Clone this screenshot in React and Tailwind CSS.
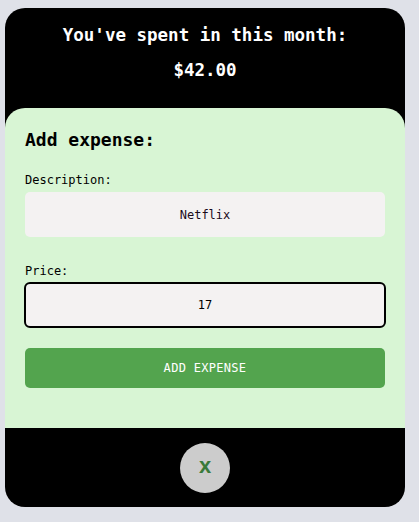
import { useState } from 'react'

export default function App() {
  const [desc, setDesc] = useState('Netflix')
  const [price, setPrice] = useState('17')

  return (
    <div className="min-h-screen bg-[#dfe1e8] pt-2 pl-[5px] font-['DejaVu_Sans_Mono',monospace]">
      <div className="w-[400px] h-[499px] bg-black rounded-[20px] flex flex-col overflow-hidden">
        {/* Summary */}
        <div className="h-[100px] flex flex-col items-center text-white font-bold text-[17.5px]">
          <p className="mt-[17px] leading-5">You've spent in this month:</p>
          <p className="mt-[15px] leading-5">$42.00</p>
        </div>

        {/* Form */}
        <div className="h-[320px] bg-[#d8f5d4] rounded-t-[20px] px-5 pt-[20px]">
          <h2 className="text-[18px] font-bold leading-6 text-black">Add expense:</h2>

          <label className="block mt-[20px] text-[12px] leading-4 text-black">Description:</label>
          <input
            value={desc}
            onChange={e => setDesc(e.target.value)}
            className="mt-[4px] w-full h-[45px] bg-[#f4f2f2] rounded-[5px] text-center text-[12px] text-[#1a0a1a] outline-none"
          />

          <label className="block mt-[26px] text-[12px] leading-4 text-black">Price:</label>
          <input
            autoFocus
            value={price}
            onChange={e => setPrice(e.target.value)}
            className="mt-[3px] -mx-[1px] w-[calc(100%+2px)] h-[46px] bg-[#f4f2f2] rounded-[6px] border-2 border-black text-center text-[12px] text-black outline-none"
          />

          <button className="mt-[20px] w-full h-[40px] bg-[#53a44e] rounded-[5px] text-white text-[12px] tracking-wide">
            ADD EXPENSE
          </button>
        </div>

        {/* Footer */}
        <div className="flex-1 flex items-center justify-center">
          <button className="w-[50px] h-[50px] rounded-full bg-[#cccccc] text-[#3a7a3a] font-bold text-[22px] font-['Liberation_Sans',sans-serif] leading-none pb-[3px]">
            x
          </button>
        </div>
      </div>
    </div>
  )
}
